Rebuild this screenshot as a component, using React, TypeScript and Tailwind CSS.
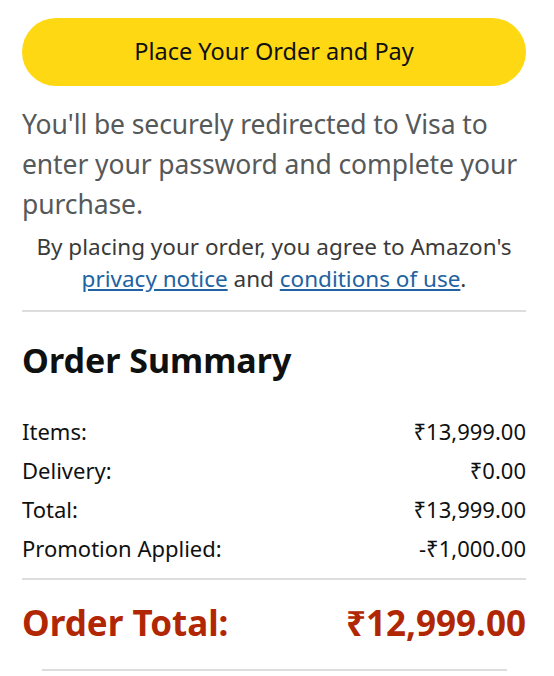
import React from "react";

const rows = [
  { label: "Items:", value: "₹13,999.00" },
  { label: "Delivery:", value: "₹0.00" },
  { label: "Total:", value: "₹13,999.00" },
  { label: "Promotion Applied:", value: "-₹1,000.00" },
];

export default function App() {
  return (
    <div
      className="w-[554px] min-h-[676px] bg-white pl-[22px] pr-[28px] pt-[18px] text-[#0f1111]"
      style={{ fontFamily: '"Noto Sans", "Open Sans", sans-serif' }}
    >
      <button
        type="button"
        className="w-full h-[68px] rounded-full bg-[#ffd814] text-[23.5px] text-[#0f1111]"
      >
        Place Your Order and Pay
      </button>

      <p className="mt-[18px] text-[26.5px] tracking-[-0.1px] leading-[40px] text-[#565959]">
        You'll be securely redirected to Visa to enter your password and complete your
        purchase.
      </p>

      <p className="mt-[7px] text-center text-[22.5px] leading-[32px] text-[#3a3a3a]">
        By placing your order, you agree to Amazon's{" "}
        <a href="#" className="text-[#2162a1] underline">
          privacy notice
        </a>{" "}
        and{" "}
        <a href="#" className="text-[#2162a1] underline">
          conditions of use
        </a>
        .
      </p>

      <div className="mt-[15px] h-[2px] bg-[#dddddd]" />

      <h2 className="mt-[28px] text-[34px] font-bold leading-[40px]">Order Summary</h2>

      <div className="mt-[32px] flex flex-col">
        {rows.map((r) => (
          <div key={r.label} className="flex justify-between text-[22px] leading-[39px]">
            <span>{r.label}</span>
            <span>{r.value}</span>
          </div>
        ))}
      </div>

      <div className="mt-[10px] h-[2px] bg-[#dddddd]" />

      <div className="mt-[21px] flex justify-between text-[35px] font-bold leading-[44px] text-[#b12704]">
        <span>Order Total:</span>
        <span>₹12,999.00</span>
      </div>

      <div className="ml-[20px] mr-[19px] mt-[24px] h-[2px] bg-[#dddddd]" />
    </div>
  );
}
